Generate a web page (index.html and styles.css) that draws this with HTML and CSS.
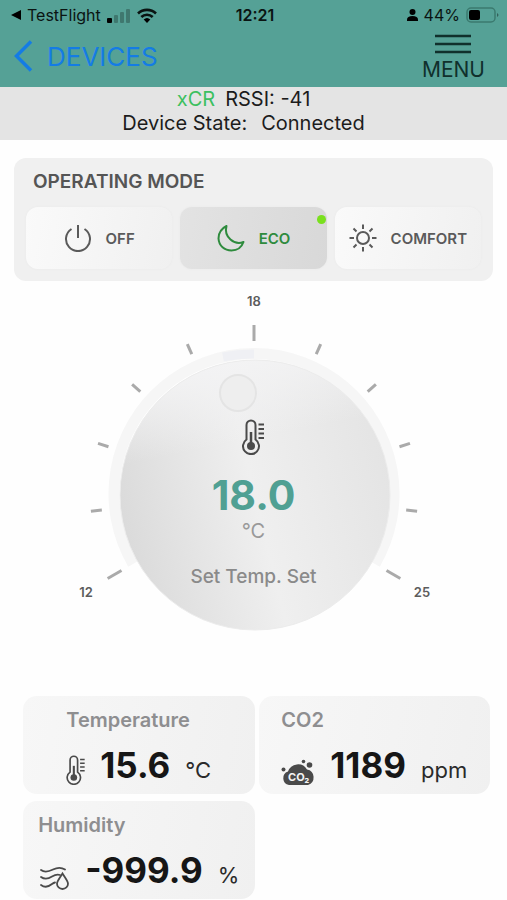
FILE: index.html
```html
<!DOCTYPE html>
<html lang="en">

	<head>
		<meta charset="UTF-8">
		<meta name="viewport" content="width=device-width, initial-scale=1">
		<title>xCR</title>
		<link rel="stylesheet" href="styles.css">
	</head>

	<body>
		<!-- shared icons -->
		<svg class="icon_defs" width="0" height="0" aria-hidden="true">
			<symbol id="thermometer" viewBox="0 0 22 36">
				<path d="M4.500 20.500V6a4.500 4.500 0 0 1 9 0v14.500a8 8 0 1 1-9 0z" fill="none" stroke="currentColor" stroke-width="2" />
				<path d="M9 13v14" stroke="currentColor" stroke-width="2.500" />
				<circle cx="9" cy="27" r="4" fill="currentColor" />
				<path d="M16.500 5.500H22M16.500 10H22M16.500 14.500H22M16.500 19H22" stroke="currentColor" stroke-width="1.800" />
			</symbol>
		</svg>

		<header class="header">
			<div class="status">
				<div class="status_left">
					<svg width="10" height="10" viewBox="0 0 10 10"><path d="M0 5L10 0v10z" /></svg>
					<span>TestFlight</span>
					<svg width="24" height="16" viewBox="0 0 24 16">
						<rect x="0" y="11" width="5" height="5" rx="1" />
						<g opacity=".25">
							<rect x="7" y="8" width="4" height="8" rx="1" />
							<rect x="13" y="5" width="4" height="11" rx="1" />
							<rect x="19" y="2" width="4" height="14" rx="1" />
						</g>
					</svg>
					<svg width="20" height="15" viewBox="0 0 20 15">
						<g fill="none" stroke="#0a1412" stroke-width="2.600">
							<path d="M1 5.500a13 13 0 0 1 18 0" />
							<path d="M4.300 9a8.200 8.200 0 0 1 11.400 0" />
						</g>
						<path d="M10 15L6.700 11.600a4.800 4.800 0 0 1 6.600 0z" />
					</svg>
				</div>
				<span class="status_time">12:21</span>
				<div class="status_right">
					<svg width="11" height="12" viewBox="0 0 11 12"><circle cx="5.500" cy="3" r="3" /><path d="M0 12v-1.500C0 8.300 2 7 5.500 7S11 8.300 11 10.500V12z" /></svg>
					<span>44%</span>
					<svg width="33" height="16" viewBox="0 0 33 16">
						<rect x="1" y="1" width="28" height="14" rx="4" fill="none" stroke="#3b7a6f" stroke-width="1.500" />
						<rect x="3" y="3" width="11" height="10" rx="2" />
						<path d="M31 6v4c2-1 2-3 0-4z" opacity=".4" />
					</svg>
				</div>
			</div>
			<nav class="nav">
				<a class="back" href="#">
					<svg width="19" height="32" viewBox="0 0 19 32"><path d="M17 1.500L2.500 16 17 30.500" fill="none" stroke="currentColor" stroke-width="3.500" /></svg>
					<span>DEVICES</span>
				</a>
				<button class="menu" type="button">
					<svg width="36" height="20" viewBox="0 0 36 20"><path d="M0 2h36M0 10h36M0 18h36" stroke="currentColor" stroke-width="2.400" /></svg>
					<span>MENU</span>
				</button>
			</nav>
		</header>

		<section class="device">
			<div><span class="device_name">xCR</span><span>RSSI: -41</span></div>
			<div><span class="device_label">Device State:</span><span>Connected</span></div>
		</section>

		<main>
			<!-- operating mode -->
			<section class="mode">
				<h2 class="mode_title">OPERATING MODE</h2>
				<div class="mode_list">
					<button class="mode_button" type="button">
						<svg width="28" height="28" viewBox="0 0 28 28" fill="none" stroke="currentColor" stroke-width="2"><path d="M7.500 5a12 12 0 1 0 13 0M14 1v13" /></svg>
						<span>OFF</span>
					</button>
					<button class="mode_button mode_active" type="button">
						<svg width="28" height="28" viewBox="0 0 28 28" fill="none" stroke="currentColor" stroke-width="2" stroke-linejoin="round"><path d="M9.500 2C4.500 4.500 1.500 9 1.500 14.500 2 22 7.500 26.500 14.500 26.500 20 26.500 24.500 23.500 26.500 18 22 20 17.500 19 13.500 15.500 9.500 12 8 7.500 9.500 2z" /></svg>
						<span>ECO</span>
						<i class="mode_dot"></i>
					</button>
					<button class="mode_button" type="button">
						<svg width="28" height="28" viewBox="0 0 28 28" fill="none" stroke="currentColor" stroke-width="2"><circle cx="14" cy="14" r="6" /><path d="M14 .5v4.500M14 23v4.500M.5 14H5M23 14h4.500M4.500 4.500l3 3M20.500 20.500l3 3M4.500 23.500l3-3M20.500 7.500l3-3" /></svg>
						<span>COMFORT</span>
					</button>
				</div>
			</section>

			<!-- set point dial -->
			<section class="dial">
				<svg class="dial_face" viewBox="-185 -204 370 345">
					<defs>
						<linearGradient id="knob" x1="0" y1=".62" x2="1" y2=".38">
							<stop offset="0" stop-color="#dadada" />
							<stop offset=".5" stop-color="#efefef" />
							<stop offset="1" stop-color="#e4e4e4" />
						</linearGradient>
						<linearGradient id="knob_light" x1=".4" y1="0" x2=".6" y2="1">
							<stop offset="0" stop-color="#f3f3f4" />
							<stop offset=".3" stop-color="#f3f3f4" stop-opacity="0" />
						</linearGradient>
					</defs>
					<path d="M-121 70A140 140 0 1 1 121 70" fill="none" stroke="#f6f6f6" stroke-width="11" />
					<path d="M-31 -137A140 140 0 0 1 0 -140" fill="none" stroke="#eff0f4" stroke-width="9" />
					<circle cx="1" cy="1" r="135" fill="url(#knob)" />
					<circle cx="1" cy="1" r="135" fill="url(#knob_light)" stroke="#ececec" stroke-width="1" />
					<circle cx="-16" cy="-101" r="18" fill="#eeeeee" stroke="#e4e4e4" stroke-width="2" />
					<g stroke="#aaaaaa" stroke-width="3">
						<path d="M0 -153v-11" transform="rotate(-96)" />
						<path d="M0 -153v-11" transform="rotate(-72)" />
						<path d="M0 -153v-11" transform="rotate(-48)" />
						<path d="M0 -153v-11" transform="rotate(-24)" />
						<path d="M0 -153v-11" transform="rotate(24)" />
						<path d="M0 -153v-11" transform="rotate(48)" />
						<path d="M0 -153v-11" transform="rotate(72)" />
						<path d="M0 -153v-11" transform="rotate(96)" />
						<path d="M0 -153v-16" transform="rotate(-120)" />
						<path d="M0 -153v-16" />
						<path d="M0 -153v-16" transform="rotate(120)" />
					</g>
					<g class="dial_scale">
						<text x="-168" y="103">12</text>
						<text x="0" y="-188">18</text>
						<text x="168" y="103">25</text>
					</g>
				</svg>
				<div class="dial_text">
					<svg class="dial_icon" width="22" height="36"><use href="#thermometer" /></svg>
					<span class="dial_value">18.0</span>
					<span class="dial_unit">°C</span>
					<span class="dial_label">Set Temp. Set</span>
				</div>
			</section>

			<!-- sensors -->
			<section class="sensors">
				<article class="sensor">
					<div>
						<h3 class="sensor_title">Temperature</h3>
						<div class="sensor_row">
							<svg width="19" height="30"><use href="#thermometer" /></svg>
							<span class="sensor_value">15.6</span>
							<span class="sensor_unit">°C</span>
						</div>
					</div>
				</article>
				<article class="sensor">
					<div>
						<h3 class="sensor_title">CO2</h3>
						<div class="sensor_row">
							<svg width="34" height="26" viewBox="0 0 34 26" fill="currentColor">
								<path d="M8 26a7 7 0 0 1-1-13.500 10.500 10.500 0 0 1 19-2A8 8 0 0 1 27 26z" />
								<circle cx="2.500" cy="10.500" r="2" /><circle cx="22.500" cy="2.500" r="1.800" /><circle cx="28.500" cy="6" r="2.800" />
								<text class="cloud_text" x="7" y="22">CO₂</text>
							</svg>
							<span class="sensor_value">1189</span>
							<span class="sensor_unit">ppm</span>
						</div>
					</div>
				</article>
				<article class="sensor">
					<div>
						<h3 class="sensor_title">Humidity</h3>
						<div class="sensor_row">
							<svg width="32" height="25" viewBox="0 0 32 25" fill="none" stroke="currentColor" stroke-width="1.800" stroke-linecap="round">
								<path d="M3 5c4 3 8 1.500 12-.5s8-2.500 12 0M3 12c4 3 8 1.500 11-.5 3-1.800 5-2.500 8-1.500M3 20c4 3 8 1.500 11-1 1-.7 2-1.300 3-1.500" />
								<path d="M24.500 8.500c3 5 5.500 7.500 5.500 10.200a5.500 5.300 0 0 1-11 0c0-2.700 2.500-5.200 5.500-10.200z" />
							</svg>
							<span class="sensor_value">-999.9</span>
							<span class="sensor_unit">%</span>
						</div>
					</div>
				</article>
			</section>
		</main>
	</body>

</html>
```
FILE: styles.css
```css
* {
	box-sizing: border-box;
}

body {
	margin: 0;
	background-color: #fefefe;
	color: #1c1c1c;
	font-family: Inter, "Liberation Sans", sans-serif;
}

svg {
	display: block;
	flex: none;
}

button {
	border: none;
	padding: 0;
	background: transparent;
	font-family: inherit;
	cursor: pointer;
}

.icon_defs {
	position: absolute;
}

/* header */

.header {
	background-color: #55a196;
	color: #0a1412;
}

.status {
	display: grid;
	grid-template-columns: 1fr auto 1fr;
	align-items: center;
	height: 30px;
	padding: 0 8px 0 11px;
	font-size: 16px;
}

.status_left,
.status_right {
	display: flex;
	align-items: center;
	gap: 6px;
}

.status_right {
	justify-content: flex-end;
}

.status_time {
	font-weight: 600;
}

.nav {
	display: flex;
	justify-content: space-between;
	padding: 4px 22px 4px 14px;
}

.back {
	display: flex;
	align-items: center;
	gap: 14px;
	height: 44px;
	color: #147ce5;
	font-size: 26px;
	text-decoration: none;
}

.menu {
	display: flex;
	flex-direction: column;
	align-items: center;
	gap: 2px;
	color: #10302c;
	font-size: 21px;
	line-height: 28px;
	height: 49px;
}

/* device state */

.device {
	padding: 0 20px 5px 0;
	background-color: #e4e4e4;
	font-size: 20px;
	line-height: 24px;
	text-align: center;
}

.device_name {
	margin-right: 10px;
	color: #3cc060;
}

.device_label {
	margin-right: 14px;
}

/* operating mode */

.mode {
	margin: 18px 14px 0;
	padding: 12px;
	border-radius: 12px;
	background-color: #f0f0f0;
}

.mode_title {
	margin: 0 0 13px 7px;
	color: #555555;
	font-size: 19px;
	font-weight: 600;
	line-height: 24px;
}

.mode_list {
	display: grid;
	grid-template-columns: repeat(3, 1fr);
	gap: 8px;
}

.mode_button {
	display: flex;
	align-items: center;
	justify-content: center;
	gap: 14px;
	position: relative;
	height: 62px;
	border-radius: 12px;
	background-image: linear-gradient(100deg, #fafafa, #f0f0f0);
	box-shadow: 0 0 2px #e6e6e6;
	color: #5a5a5a;
	font-size: 15px;
	font-weight: 600;
}

.mode_active {
	background-image: linear-gradient(100deg, #e3e3e3, #d8d8d8);
	color: #2e8b3d;
}

.mode_dot {
	position: absolute;
	top: 8px;
	right: 1px;
	width: 9px;
	height: 9px;
	border-radius: 50%;
	background-color: #7ae01e;
}

/* dial */

.dial {
	display: grid;
	justify-items: center;
	margin-top: 9px;
}

.dial_face,
.dial_text {
	grid-area: 1 / 1;
}

.dial_face {
	width: 370px;
	max-width: 100%;
}

.dial_scale {
	fill: #5c5c5c;
	font-size: 13px;
	font-weight: 600;
	text-anchor: middle;
}

.dial_text {
	display: flex;
	flex-direction: column;
	align-items: center;
	padding-top: 129px;
}

.dial_icon {
	color: #4a4a4a;
}

.dial_value {
	margin-top: 16px;
	color: #50a093;
	font-size: 41px;
	font-weight: 700;
	line-height: 48px;
}

.dial_unit {
	color: #999999;
	font-size: 20px;
	line-height: 24px;
}

.dial_label {
	margin-top: 22px;
	color: #8a8a8a;
	font-size: 19px;
	font-weight: 500;
	line-height: 24px;
}

/* sensors */

.sensors {
	display: grid;
	grid-template-columns: 1fr 1fr;
	gap: 7px 4px;
	margin: 61px 17px 0 23px;
}

.sensor {
	display: flex;
	justify-content: center;
	height: 98px;
	padding-top: 12px;
	border-radius: 14px;
	background-image: linear-gradient(100deg, #f7f7f7, #f0f0f0);
}

.sensor_title {
	margin: 0;
	color: #8e8e90;
	font-size: 20px;
	font-weight: 600;
	line-height: 24px;
}

.sensor_row {
	display: flex;
	align-items: baseline;
	gap: 15px;
	margin-top: 13px;
	color: #4a4a4a;
}

.sensor_row svg {
	align-self: flex-end;
}

.sensor_value {
	color: #161616;
	font-size: 35px;
	font-weight: 700;
	line-height: 40px;
}

.sensor_unit {
	color: #2a2a2a;
	font-size: 22px;
}

.cloud_text {
	fill: #f4f4f4;
	font-size: 11px;
	font-weight: 700;
}
```
